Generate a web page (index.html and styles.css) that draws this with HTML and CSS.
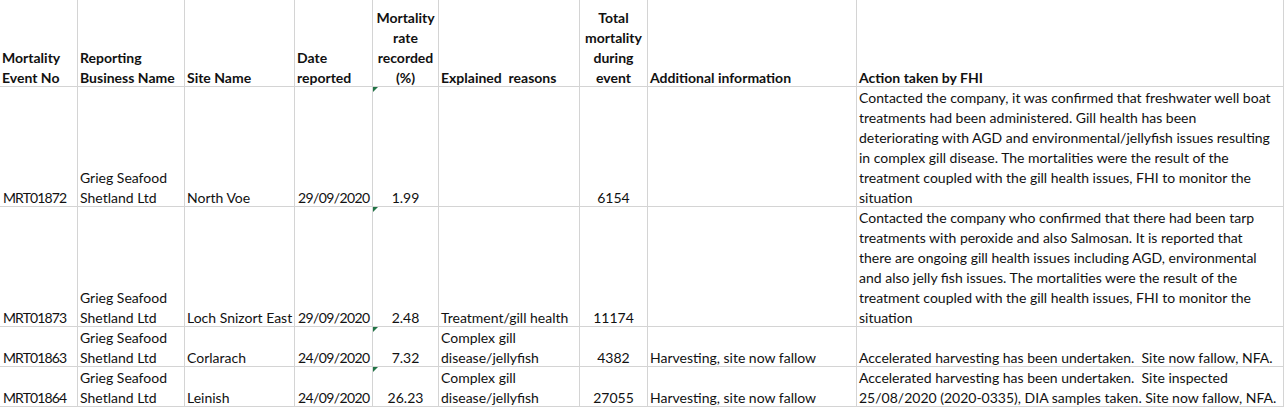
FILE: index.html
```html
<!DOCTYPE html>
<html lang="en">
<head>
<meta charset="utf-8">
<title>Mortality events</title>
<link rel="stylesheet" href="styles.css">
</head>
<body>
<div class="sheet">
  <div class="cell hd">Mortality<br>Event No</div>
  <div class="cell hd">Reporting<br>Business Name</div>
  <div class="cell hd">Site Name</div>
  <div class="cell hd">Date<br>reported</div>
  <div class="cell hd c">Mortality<br>rate<br>recorded<br>(%)</div>
  <div class="cell hd">Explained&nbsp; reasons</div>
  <div class="cell hd c">Total<br>mortality<br>during<br>event</div>
  <div class="cell hd">Additional information</div>
  <div class="cell hd">Action taken by FHI</div>

  <div class="cell id">MRT01872</div>
  <div class="cell">Grieg Seafood<br>Shetland Ltd</div>
  <div class="cell">North Voe</div>
  <div class="cell date">29/09/2020</div>
  <div class="cell c flag">1.99</div>
  <div class="cell"></div>
  <div class="cell c">6154</div>
  <div class="cell"></div>
  <div class="cell">Contacted the company, it was confirmed that freshwater well boat<br>treatments had been administered. Gill health has been<br>deteriorating with AGD and environmental/jellyfish issues resulting<br>in complex gill disease. The mortalities were the result of the<br>treatment coupled with the gill health issues, FHI to monitor the<br>situation</div>

  <div class="cell id">MRT01873</div>
  <div class="cell">Grieg Seafood<br>Shetland Ltd</div>
  <div class="cell">Loch Snizort East</div>
  <div class="cell date">29/09/2020</div>
  <div class="cell c flag">2.48</div>
  <div class="cell">Treatment/gill health</div>
  <div class="cell c">11174</div>
  <div class="cell"></div>
  <div class="cell">Contacted the company who confirmed that there had been tarp<br>treatments with peroxide and also Salmosan. It is reported that<br>there are ongoing gill health issues including AGD, environmental<br>and also jelly fish issues. The mortalities were the result of the<br>treatment coupled with the gill health issues, FHI to monitor the<br>situation</div>

  <div class="cell id">MRT01863</div>
  <div class="cell">Grieg Seafood<br>Shetland Ltd</div>
  <div class="cell">Corlarach</div>
  <div class="cell date">24/09/2020</div>
  <div class="cell c flag">7.32</div>
  <div class="cell">Complex gill<br>disease/jellyfish</div>
  <div class="cell c">4382</div>
  <div class="cell">Harvesting, site now fallow</div>
  <div class="cell">Accelerated harvesting has been undertaken.&nbsp; Site now fallow, NFA.</div>

  <div class="cell id">MRT01864</div>
  <div class="cell">Grieg Seafood<br>Shetland Ltd</div>
  <div class="cell">Leinish</div>
  <div class="cell date">24/09/2020</div>
  <div class="cell c flag">26.23</div>
  <div class="cell">Complex gill<br>disease/jellyfish</div>
  <div class="cell c">27055</div>
  <div class="cell">Harvesting, site now fallow</div>
  <div class="cell">Accelerated harvesting has been undertaken.&nbsp; Site inspected<br>25/08/2020 (2020-0335), DIA samples taken. Site now fallow, NFA.</div>
</div>
</body>
</html>
```

FILE: styles.css
```css
html, body {
  margin: 0;
  padding: 0;
  background: #ffffff;
}

.sheet {
  display: grid;
  grid-template-columns: 78px 107px 110px 78px 66px 141px 68px 209px 427px;
  grid-template-rows: 87px 120px 120px 40px 40px;
  font-family: "Lato", "Open Sans", sans-serif;
  font-size: 14px;
  line-height: 20px;
  color: #111111;
}

.cell {
  box-sizing: border-box;
  border-right: 1px solid #d4d4d4;
  border-bottom: 1px solid #d4d4d4;
  padding: 0 2px 0 2px;
  display: flex;
  flex-direction: column;
  justify-content: flex-end;
  white-space: nowrap;
  position: relative;
}

/* nudges the bottom-aligned text 2px lower, as in the sheet */
.cell::after {
  content: "";
  height: 0;
  margin-bottom: -2px;
}

.hd {
  font-weight: 700;
}

.c {
  text-align: center;
}

.id {
  padding-left: 3px;
  letter-spacing: -0.9px;
}

.date {
  padding-left: 3px;
  letter-spacing: -0.6px;
}

.flag::before {
  content: "";
  position: absolute;
  left: 0;
  top: 0;
  width: 0;
  height: 0;
  border-top: 5px solid #217346;
  border-right: 5px solid transparent;
}
```
